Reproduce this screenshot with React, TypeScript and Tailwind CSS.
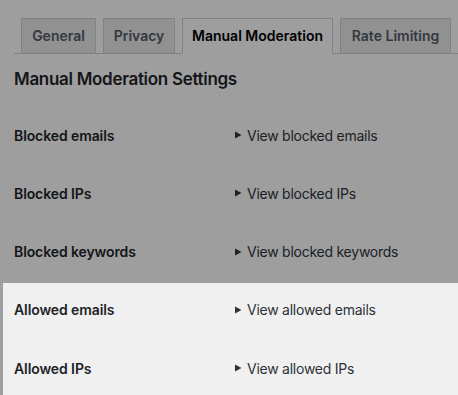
import React from 'react';

const tabs = [
  { label: 'General', width: 'w-[75px]', active: false },
  { label: 'Privacy', width: 'w-[72px]', active: false },
  { label: 'Manual Moderation', width: 'w-[151px]', active: true },
  { label: 'Rate Limiting', width: 'w-[111px]', active: false },
];

const rows = [
  { label: 'Blocked emails', link: 'View blocked emails' },
  { label: 'Blocked IPs', link: 'View blocked IPs' },
  { label: 'Blocked keywords', link: 'View blocked keywords' },
  { label: 'Allowed emails', link: 'View allowed emails' },
  { label: 'Allowed IPs', link: 'View allowed IPs' },
];

const Marker = () => (
  <svg width="8" height="8" viewBox="0 0 8 8" className="shrink-0">
    <path d="M1 0.5 L7.5 4 L1 7.5 Z" fill="currentColor" />
  </svg>
);

export default function App() {
  return (
    <div
      className="relative w-[458px] h-[395px] overflow-hidden bg-[#f0f0f1] text-[#1d2327]"
      style={{ fontFamily: 'Inter, "Noto Sans", sans-serif' }}
    >
      {/* tab bar */}
      <div className="ml-[14px] mt-[18px] pl-[7px] flex gap-[7px] border-b border-[#c3c4c7]">
        {tabs.map((t) => (
          <div
            key={t.label}
            className={`${t.width} h-[36px] -mb-px flex items-center justify-center border border-[#c3c4c7] text-[14px] font-semibold leading-[24px] whitespace-nowrap ${
              t.active ? 'bg-[#f0f0f1] border-b-[#f0f0f1] text-black' : 'bg-[#dcdcde] text-[#50575e]'
            }`}
          >
            {t.label}
          </div>
        ))}
      </div>

      <div className="h-[52px] flex items-center px-[14px]">
        <h2 className="text-[17px] font-semibold tracking-[-0.3px]">Manual Moderation Settings</h2>
      </div>

      <div className="px-[14px]">
        {rows.map((r) => (
          <div key={r.label} className="h-[58.25px] flex items-center">
            <div className="w-[220px] text-[14px] font-semibold tracking-[-0.1px]">{r.label}</div>
            <div className="flex items-center gap-[5px] text-[14px] text-[#2c3338] tracking-[-0.25px]">
              <Marker />
              <span>{r.link}</span>
            </div>
          </div>
        ))}
      </div>

      {/* spotlight overlay */}
      <div className="absolute left-[3px] top-[283px] right-0 bottom-0 shadow-[0_0_0_9999px_rgba(0,0,0,0.34)] pointer-events-none" />
    </div>
  );
}
